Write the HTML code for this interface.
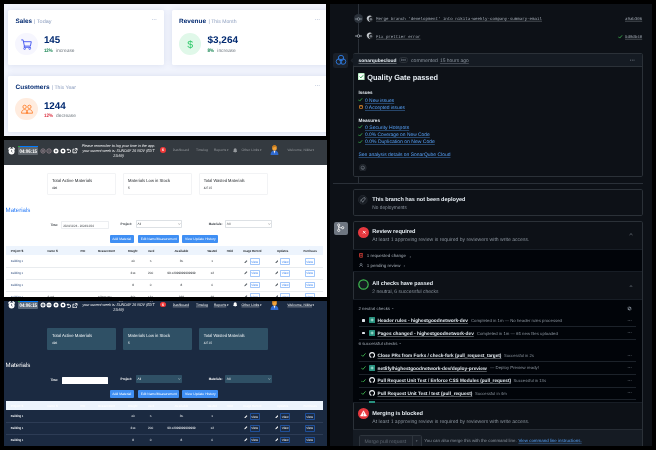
<!DOCTYPE html>
<html lang="en"><head><meta charset="utf-8"><title>Screens</title><style>
html,body{margin:0;padding:0;background:#000;}
body{width:656px;height:450px;overflow:hidden;position:relative;font-family:"Liberation Sans",sans-serif;}
.p{position:absolute;overflow:hidden;}
.a{position:absolute;display:block;}
.tx{font-family:"Liberation Sans",sans-serif;pointer-events:none;text-rendering:geometricPrecision;will-change:transform;}
text{white-space:pre;}
</style></head>
<body>
<div class="p" style="left:4px;top:4px;width:322px;height:132px;background:#f1f4fd">
<div class="a" style="left:4.00px;top:6.40px;width:155.60px;height:54.80px;background:#fff;border-radius:1.5px;box-shadow:0 0 6px rgba(1,41,112,.10);"></div>
<div class="a" style="left:168.00px;top:6.40px;width:168.00px;height:54.80px;background:#fff;border-radius:1.5px;box-shadow:0 0 6px rgba(1,41,112,.10);"></div>
<div class="a" style="left:4.00px;top:72.40px;width:332.00px;height:55.20px;background:#fff;border-radius:1.5px;box-shadow:0 0 6px rgba(1,41,112,.10);"></div>
<div class="a" style="left:11.40px;top:28.60px;width:22.20px;height:22.20px;background:#f6f6fe;border-radius:11.1px;"></div>
<div class="a" style="left:175.00px;top:28.60px;width:22.20px;height:22.20px;background:#e0f8e9;border-radius:11.1px;"></div>
<div class="a" style="left:11.40px;top:94.20px;width:22.20px;height:22.20px;background:#ffecdf;border-radius:11.1px;"></div>
<svg class="a" style="left:17.00px;top:34.60px;" width="11" height="11" viewBox="0 0 11 11"><g fill="none" stroke="#4154f1" stroke-width="0.9" stroke-linecap="round" stroke-linejoin="round"><path d="M0.6 0.9h1.5l1.3 6.2h6l0.9-4.4H2.6"/><path d="M3.4 7.1l-.4 1.2h6.6"/></g><circle cx="3.6" cy="9.6" r="0.9" fill="none" stroke="#4154f1" stroke-width="0.7"/><circle cx="8.7" cy="9.6" r="0.9" fill="none" stroke="#4154f1" stroke-width="0.7"/></svg>
<svg class="a" style="left:16.60px;top:100.20px;" width="12" height="10" viewBox="0 0 12 10"><g fill="none" stroke="#ff771d" stroke-width="0.8" stroke-linejoin="round"><circle cx="3.6" cy="2.9" r="1.7"/><circle cx="8.4" cy="2.9" r="1.7"/><path d="M0.5 9.2c0-2.4 1.4-3.6 3.1-3.6s3.1 1.2 3.1 3.6z"/><path d="M5.3 9.2c0-2.4 1.4-3.6 3.1-3.6s3.1 1.2 3.1 3.6z"/></g></svg>
<svg class="a tx" style="left:0;top:0" width="322" height="132">
<text y="19.20" font-size="6.3" fill="#012970" font-weight="700" x="11.50" textLength="16.50" lengthAdjust="spacingAndGlyphs">Sales</text>
<text y="18.92" font-size="5.2" fill="#899bbd" x="30.00" textLength="17.50" lengthAdjust="spacingAndGlyphs">| Today</text>
<text y="39.13" font-size="9.8" fill="#012970" font-weight="700" x="39.90" textLength="16.30" lengthAdjust="spacingAndGlyphs">145</text>
<text y="47.72" font-size="4.9" fill="#198754" font-weight="700" x="39.90" textLength="8.90" lengthAdjust="spacingAndGlyphs">12%</text>
<text y="47.72" font-size="4.9" fill="#6c757d" x="52.00" textLength="18.60" lengthAdjust="spacingAndGlyphs">increase</text>
<text y="17.05" font-size="5" fill="#aab7cf" font-weight="700" x="147.80">···</text>
<text y="19.20" font-size="6.3" fill="#012970" font-weight="700" x="175.10" textLength="26.90" lengthAdjust="spacingAndGlyphs">Revenue</text>
<text y="18.92" font-size="5.2" fill="#899bbd" x="204.50" textLength="28.00" lengthAdjust="spacingAndGlyphs">| This Month</text>
<text y="39.13" font-size="9.8" fill="#012970" font-weight="700" x="203.50" textLength="30.50" lengthAdjust="spacingAndGlyphs">$3,264</text>
<text y="47.72" font-size="4.9" fill="#198754" font-weight="700" x="203.50" textLength="6.50" lengthAdjust="spacingAndGlyphs">8%</text>
<text y="47.72" font-size="4.9" fill="#6c757d" x="213.30" textLength="18.50" lengthAdjust="spacingAndGlyphs">increase</text>
<text y="17.05" font-size="5" fill="#aab7cf" font-weight="700" x="311.10">···</text>
<text y="84.80" font-size="6.3" fill="#012970" font-weight="700" x="11.50" textLength="34.10" lengthAdjust="spacingAndGlyphs">Customers</text>
<text y="84.52" font-size="5.2" fill="#899bbd" x="47.80" textLength="24.10" lengthAdjust="spacingAndGlyphs">| This Year</text>
<text y="104.73" font-size="9.8" fill="#012970" font-weight="700" x="39.90" textLength="21.90" lengthAdjust="spacingAndGlyphs">1244</text>
<text y="113.31" font-size="4.9" fill="#dc3545" font-weight="700" x="39.90" textLength="9.20" lengthAdjust="spacingAndGlyphs">12%</text>
<text y="113.31" font-size="4.9" fill="#6c757d" x="52.00" textLength="19.90" lengthAdjust="spacingAndGlyphs">decrease</text>
<text y="82.65" font-size="5" fill="#aab7cf" font-weight="700" x="311.10">···</text>
<text y="43.57" font-size="10.5" fill="#2eca6a" x="186.20" text-anchor="middle">$</text>
</svg>
</div>
<div class="p" style="left:4px;top:140px;width:322.5px;height:157px;background:#ffffff">
<div class="a" style="left:0.00px;top:0.00px;width:323.00px;height:24.50px;background:#343a40;"></div>
<svg class="a" style="left:4.40px;top:6.60px;" width="7.2" height="8.1" viewBox="0 0 7.2 8.1"><g transform="scale(.9)"><circle cx="4" cy="5.100" r="3.300" fill="#fff"/><path d="M0.900 2.300L2.400 0.900M7.100 2.300L5.600 0.900" stroke="#fff" stroke-width="1.500" stroke-linecap="round"/><path d="M4 3.300V5.200l1 .7" fill="none" stroke="#343a40" stroke-width=".7"/></g></svg>
<div class="a" style="left:13.60px;top:6.10px;width:20.60px;height:0.80px;background:#007bff;"></div>
<div class="a" style="left:13.60px;top:6.10px;width:2.00px;height:0.80px;background:#28a745;"></div>
<div class="a" style="left:13.50px;top:7.20px;width:20.80px;height:7.60px;background:#5f666d;border-radius:1px;"></div>
<svg class="a" style="left:35.60px;top:7.90px;" width="6" height="6" viewBox="0 0 6 6"><circle cx="3" cy="3" r="2.150" fill="none" stroke="#9c8a93" stroke-width=".8"/><path d="M3 1.900v2.200M1.900 3h2.200" stroke="#9c8a93" stroke-width=".7"/></svg>
<svg class="a" style="left:42.30px;top:7.90px;" width="6" height="6" viewBox="0 0 6 6"><circle cx="3" cy="3" r="2.150" fill="none" stroke="#9c8a93" stroke-width=".8"/><path d="M1.900 3h2.200" stroke="#9c8a93" stroke-width=".7"/></svg>
<svg class="a" style="left:49.20px;top:7.90px;" width="6" height="6" viewBox="0 0 6 6"><circle cx="3" cy="3" r="2.500" fill="#fff"/><path d="M2.400 1.700L4.500 3 2.400 4.300z" fill="#343a40"/></svg>
<svg class="a" style="left:55.80px;top:7.90px;" width="6" height="6" viewBox="0 0 6 6"><circle cx="3" cy="3" r="2.500" fill="#fff"/><rect x="2.100" y="2.100" width="1.800" height="1.800" fill="#343a40"/></svg>
<svg class="a" style="left:61.60px;top:8.30px;" width="5.4" height="5.4" viewBox="0 0 5.4 5.4"><path d="M1.500 1.700h1.900a1.400 1.400 0 0 1 0 2.800H1.700" fill="none" stroke="#fff" stroke-width=".9"/><path d="M2.300 0.300L0.500 1.700l1.800 1.400z" fill="#fff"/></svg>
<svg class="a" style="left:68.00px;top:8.10px;" width="5.6" height="5.6" viewBox="0 0 5.6 5.6"><path d="M2.500 1.200H0.900v3.600h3.600V3.300" fill="none" stroke="#fff" stroke-width=".85"/><path d="M3.100 0.600h2v2M4.900 0.800L2.700 3" fill="none" stroke="#fff" stroke-width=".85"/></svg>
<div class="a" style="left:156.00px;top:7.10px;width:5.80px;height:5.80px;background:#f23a3a;border-radius:3px;"></div>
<svg class="a" style="left:229.00px;top:7.60px;" width="4.4" height="5.4" viewBox="0 0 4.4 5.4"><path d="M2.2 0.3c1 0 1.5.8 1.5 1.8 0 1.1.3 1.6.6 2H.1c.3-.4.6-.9.6-2C.7 1.1 1.2.3 2.2.3zM1.6 4.5h1.2a.6.6 0 0 1-1.2 0z" fill="#95999d"/></svg>
<svg class="a" style="left:266.40px;top:5.20px;" width="9" height="10" viewBox="0 0 9 10"><path d="M0.6 10c0-2.8 1.2-4.4 3.9-4.4S8.4 7.200 8.400 10z" fill="#2f6ad0"/><path d="M3.700 5.700h1.600l-.8 3z" fill="#f4f6fa"/><ellipse cx="4.5" cy="3.100" rx="2.300" ry="2.700" fill="#f2a33a"/><path d="M2.200 2.700c0-1.800 1-2.600 2.300-2.600s2.300.8 2.300 2.600c-.8-.2-1.300-.8-1.600-1.300-.6.700-1.800 1.200-3 1.300z" fill="#c77a1c"/></svg>
<div class="a" style="left:43.30px;top:33.40px;width:69.00px;height:22.00px;background:#ffffff;border:0.6px solid #f2f3f5;box-sizing:border-box;border-radius:1px;"></div>
<div class="a" style="left:119.40px;top:33.40px;width:68.50px;height:22.00px;background:#ffffff;border:0.6px solid #f2f3f5;box-sizing:border-box;border-radius:1px;"></div>
<div class="a" style="left:195.00px;top:33.40px;width:68.70px;height:22.00px;background:#ffffff;border:0.6px solid #f2f3f5;box-sizing:border-box;border-radius:1px;"></div>
<div class="a" style="left:57.30px;top:81.30px;width:47.40px;height:8.00px;background:#ffffff;border:0.6px solid #eceef1;box-sizing:border-box;border-radius:0.8px;"></div>
<div class="a" style="left:131.60px;top:80.30px;width:46.20px;height:7.30px;background:#ffffff;border:0.6px solid #dde1e5;box-sizing:border-box;border-radius:0.8px;"></div>
<svg class="a" style="left:174.00px;top:82.90px;" width="2.6" height="2" viewBox="0 0 2.6 2"><path d="M0.3 0.4L1.3 1.5 2.3 0.4" fill="none" stroke="#777" stroke-width=".5"/></svg>
<div class="a" style="left:220.90px;top:80.30px;width:46.90px;height:7.30px;background:#ffffff;border:0.6px solid #dde1e5;box-sizing:border-box;border-radius:0.8px;"></div>
<svg class="a" style="left:264.00px;top:82.90px;" width="2.6" height="2" viewBox="0 0 2.6 2"><path d="M0.3 0.4L1.3 1.5 2.3 0.4" fill="none" stroke="#777" stroke-width=".5"/></svg>
<div class="a" style="left:105.60px;top:95.00px;width:24.20px;height:8.10px;background:#3f8ff4;border-radius:0.9px;"></div>
<div class="a" style="left:134.20px;top:95.00px;width:41.10px;height:8.10px;background:#3f8ff4;border-radius:0.9px;"></div>
<div class="a" style="left:178.40px;top:95.00px;width:35.90px;height:8.10px;background:#3f8ff4;border-radius:0.9px;"></div>
<div class="a" style="left:1.50px;top:106.30px;width:317.30px;height:8.90px;background:#edf4fd;"></div>
<div class="a" style="left:245.80px;top:118.20px;width:9.80px;height:6.60px;background:#ffffff;border:0.7px solid #a4c8fa;box-sizing:border-box;border-radius:0.8px;"></div>
<svg class="a" style="left:240.40px;top:119.50px;" width="3.6" height="3.6" viewBox="0 0 3.6 3.6"><path d="M0.3 3.3l.3-1.100L2.600.2l.8.8L1.400 3z" fill="#555c63"/></svg>
<div class="a" style="left:276.30px;top:118.20px;width:9.80px;height:6.60px;background:#ffffff;border:0.7px solid #a4c8fa;box-sizing:border-box;border-radius:0.8px;"></div>
<svg class="a" style="left:270.60px;top:119.50px;" width="3.6" height="3.6" viewBox="0 0 3.6 3.6"><path d="M0.3 3.3l.3-1.100L2.600.2l.8.8L1.400 3z" fill="#555c63"/></svg>
<div class="a" style="left:300.80px;top:118.20px;width:9.80px;height:6.60px;background:#ffffff;border:0.7px solid #a4c8fa;box-sizing:border-box;border-radius:0.8px;"></div>
<div class="a" style="left:1.50px;top:127.15px;width:317.30px;height:0.60px;background:#e9ecef;"></div>
<div class="a" style="left:245.80px;top:129.95px;width:9.80px;height:6.60px;background:#ffffff;border:0.7px solid #a4c8fa;box-sizing:border-box;border-radius:0.8px;"></div>
<svg class="a" style="left:240.40px;top:131.25px;" width="3.6" height="3.6" viewBox="0 0 3.6 3.6"><path d="M0.3 3.3l.3-1.100L2.600.2l.8.8L1.400 3z" fill="#555c63"/></svg>
<div class="a" style="left:276.30px;top:129.95px;width:9.80px;height:6.60px;background:#ffffff;border:0.7px solid #a4c8fa;box-sizing:border-box;border-radius:0.8px;"></div>
<svg class="a" style="left:270.60px;top:131.25px;" width="3.6" height="3.6" viewBox="0 0 3.6 3.6"><path d="M0.3 3.3l.3-1.100L2.600.2l.8.8L1.400 3z" fill="#555c63"/></svg>
<div class="a" style="left:300.80px;top:129.95px;width:9.80px;height:6.60px;background:#ffffff;border:0.7px solid #a4c8fa;box-sizing:border-box;border-radius:0.8px;"></div>
<div class="a" style="left:1.50px;top:138.90px;width:317.30px;height:0.60px;background:#e9ecef;"></div>
<div class="a" style="left:245.80px;top:141.70px;width:9.80px;height:6.60px;background:#ffffff;border:0.7px solid #a4c8fa;box-sizing:border-box;border-radius:0.8px;"></div>
<svg class="a" style="left:240.40px;top:143.00px;" width="3.6" height="3.6" viewBox="0 0 3.6 3.6"><path d="M0.3 3.3l.3-1.100L2.600.2l.8.8L1.400 3z" fill="#555c63"/></svg>
<div class="a" style="left:276.30px;top:141.70px;width:9.80px;height:6.60px;background:#ffffff;border:0.7px solid #a4c8fa;box-sizing:border-box;border-radius:0.8px;"></div>
<svg class="a" style="left:270.60px;top:143.00px;" width="3.6" height="3.6" viewBox="0 0 3.6 3.6"><path d="M0.3 3.3l.3-1.100L2.600.2l.8.8L1.400 3z" fill="#555c63"/></svg>
<div class="a" style="left:300.80px;top:141.70px;width:9.80px;height:6.60px;background:#ffffff;border:0.7px solid #a4c8fa;box-sizing:border-box;border-radius:0.8px;"></div>
<div class="a" style="left:1.50px;top:150.65px;width:317.30px;height:0.60px;background:#e9ecef;"></div>
<div class="a" style="left:245.80px;top:153.45px;width:9.80px;height:6.60px;background:#ffffff;border:0.7px solid #a4c8fa;box-sizing:border-box;border-radius:0.8px;"></div>
<svg class="a" style="left:240.40px;top:154.75px;" width="3.6" height="3.6" viewBox="0 0 3.6 3.6"><path d="M0.3 3.3l.3-1.100L2.600.2l.8.8L1.400 3z" fill="#555c63"/></svg>
<div class="a" style="left:276.30px;top:153.45px;width:9.80px;height:6.60px;background:#ffffff;border:0.7px solid #a4c8fa;box-sizing:border-box;border-radius:0.8px;"></div>
<svg class="a" style="left:270.60px;top:154.75px;" width="3.6" height="3.6" viewBox="0 0 3.6 3.6"><path d="M0.3 3.3l.3-1.100L2.600.2l.8.8L1.400 3z" fill="#555c63"/></svg>
<div class="a" style="left:300.80px;top:153.45px;width:9.80px;height:6.60px;background:#ffffff;border:0.7px solid #a4c8fa;box-sizing:border-box;border-radius:0.8px;"></div>
<svg class="a tx" style="left:0;top:0" width="322.5" height="157">
<text y="12.92" font-size="5.2" fill="#ffffff" font-weight="700" x="15.50" textLength="17.50" lengthAdjust="spacingAndGlyphs">04:06:15</text>
<text y="6.97" font-size="3.9" fill="#f4f5f6" font-style="italic" x="114.40" text-anchor="middle" textLength="73.40" lengthAdjust="spacingAndGlyphs">Please remember to log your time in the app:</text>
<text y="12.06" font-size="3.9" fill="#f4f5f6" font-style="italic" x="114.40" text-anchor="middle" textLength="72.00" lengthAdjust="spacingAndGlyphs">your current week is: SUNDAY 26 NOV (EDT</text>
<text y="16.97" font-size="3.9" fill="#f4f5f6" font-style="italic" x="114.60" text-anchor="middle" textLength="10.50" lengthAdjust="spacingAndGlyphs">23:59)</text>
<text y="11.36" font-size="3.6" fill="#fff" font-weight="700" x="158.90" text-anchor="middle">6</text>
<text y="11.41" font-size="3.45" fill="#95999d" x="168.80" textLength="16.20" lengthAdjust="spacingAndGlyphs">Dashboard</text>
<text y="11.41" font-size="3.45" fill="#95999d" x="192.00" textLength="12.00" lengthAdjust="spacingAndGlyphs">Timelog</text>
<text y="11.41" font-size="3.45" fill="#95999d" x="209.80" textLength="12.50" lengthAdjust="spacingAndGlyphs">Reports</text>
<text y="11.45" font-size="3.0" fill="#95999d" x="223.00">▾</text>
<text y="11.41" font-size="3.45" fill="#95999d" x="237.50" textLength="17.80" lengthAdjust="spacingAndGlyphs">Other Links</text>
<text y="11.45" font-size="3.0" fill="#95999d" x="256.00">▾</text>
<text y="11.41" font-size="3.45" fill="#95999d" x="283.40" textLength="24.60" lengthAdjust="spacingAndGlyphs">Welcome, Nikita</text>
<text y="11.45" font-size="3.0" fill="#95999d" x="308.60">▾</text>
<text y="42.44" font-size="4.4" fill="#23272b" x="48.00" textLength="40.20" lengthAdjust="spacingAndGlyphs">Total Active Materials</text>
<text y="49.42" font-size="3.2" fill="#23272b" x="48.00" textLength="5.20" lengthAdjust="spacingAndGlyphs">496</text>
<text y="42.44" font-size="4.4" fill="#23272b" x="124.10" textLength="41.90" lengthAdjust="spacingAndGlyphs">Materials Low in Stock</text>
<text y="49.42" font-size="3.2" fill="#23272b" x="124.10" textLength="1.80" lengthAdjust="spacingAndGlyphs">5</text>
<text y="42.44" font-size="4.4" fill="#23272b" x="199.70" textLength="40.90" lengthAdjust="spacingAndGlyphs">Total Wasted Materials</text>
<text y="49.42" font-size="3.2" fill="#23272b" x="199.70" textLength="8.30" lengthAdjust="spacingAndGlyphs">427.15</text>
<text y="71.77" font-size="6.2" fill="#2a7cf7" x="1.60" textLength="24.80" lengthAdjust="spacingAndGlyphs">Materials</text>
<text y="86.46" font-size="3.3" fill="#343a40" font-weight="700" x="46.60" textLength="7.40" lengthAdjust="spacingAndGlyphs">Time:</text>
<text y="86.52" font-size="3.2" fill="#3d4247" x="59.20" textLength="30.80" lengthAdjust="spacingAndGlyphs">2024/11/26 - 2024/12/03</text>
<text y="85.16" font-size="3.3" fill="#343a40" font-weight="700" x="116.60" textLength="11.40" lengthAdjust="spacingAndGlyphs">Project:</text>
<text y="85.16" font-size="3.3" fill="#343a40" font-weight="700" x="204.80" textLength="13.60" lengthAdjust="spacingAndGlyphs">Materials:</text>
<text y="85.12" font-size="3.2" fill="#3d4247" x="133.50">All</text>
<text y="85.12" font-size="3.2" fill="#3d4247" x="222.80">All</text>
<text y="100.37" font-size="3.35" fill="#ffffff" x="108.20" textLength="19.00" lengthAdjust="spacingAndGlyphs">Add Material</text>
<text y="100.37" font-size="3.35" fill="#ffffff" x="136.80" textLength="35.90" lengthAdjust="spacingAndGlyphs">Edit Name/Measurement</text>
<text y="100.37" font-size="3.35" fill="#ffffff" x="181.00" textLength="30.70" lengthAdjust="spacingAndGlyphs">View Update History</text>
<text y="112.28" font-size="3.1" fill="#1f2429" font-weight="700" x="6.80" textLength="13.00" lengthAdjust="spacingAndGlyphs">Project ⇅</text>
<text y="112.28" font-size="3.1" fill="#1f2429" font-weight="700" x="43.50" textLength="10.50" lengthAdjust="spacingAndGlyphs">Name ⇅</text>
<text y="112.28" font-size="3.1" fill="#1f2429" font-weight="700" x="76.50" textLength="4.70" lengthAdjust="spacingAndGlyphs">PID</text>
<text y="112.28" font-size="3.1" fill="#1f2429" font-weight="700" x="94.00" textLength="17.00" lengthAdjust="spacingAndGlyphs">Measurement</text>
<text y="112.28" font-size="3.1" fill="#1f2429" font-weight="700" x="124.00" textLength="9.40" lengthAdjust="spacingAndGlyphs">Bought</text>
<text y="112.28" font-size="3.1" fill="#1f2429" font-weight="700" x="144.00" textLength="6.20" lengthAdjust="spacingAndGlyphs">Used</text>
<text y="112.28" font-size="3.1" fill="#1f2429" font-weight="700" x="170.40" textLength="14.00" lengthAdjust="spacingAndGlyphs">Available</text>
<text y="112.28" font-size="3.1" fill="#1f2429" font-weight="700" x="203.40" textLength="9.60" lengthAdjust="spacingAndGlyphs">Wasted</text>
<text y="112.28" font-size="3.1" fill="#1f2429" font-weight="700" x="222.70" textLength="6.30" lengthAdjust="spacingAndGlyphs">Hold</text>
<text y="112.28" font-size="3.1" fill="#1f2429" font-weight="700" x="239.00" textLength="18.40" lengthAdjust="spacingAndGlyphs">Usage Record</text>
<text y="112.28" font-size="3.1" fill="#1f2429" font-weight="700" x="273.00" textLength="11.40" lengthAdjust="spacingAndGlyphs">Updates</text>
<text y="112.28" font-size="3.1" fill="#1f2429" font-weight="700" x="299.60" textLength="13.40" lengthAdjust="spacingAndGlyphs">Purchases</text>
<text y="122.38" font-size="3.1" fill="#2b4a7c" x="6.80" textLength="12.40" lengthAdjust="spacingAndGlyphs">Building 1</text>
<text y="122.38" font-size="3.1" fill="#2f3439" x="129.00" text-anchor="middle">40</text>
<text y="122.38" font-size="3.1" fill="#2f3439" x="146.60" text-anchor="middle">5</text>
<text y="122.38" font-size="3.1" fill="#2f3439" x="177.40" text-anchor="middle">35</text>
<text y="122.38" font-size="3.1" fill="#2f3439" x="208.20" text-anchor="middle">1</text>
<text y="122.69" font-size="3.1" fill="#2f7df0" x="250.70" text-anchor="middle">View</text>
<text y="122.69" font-size="3.1" fill="#2f7df0" x="281.20" text-anchor="middle">View</text>
<text y="122.69" font-size="3.1" fill="#2f7df0" x="305.70" text-anchor="middle">View</text>
<text y="134.13" font-size="3.1" fill="#2b4a7c" x="6.80" textLength="12.40" lengthAdjust="spacingAndGlyphs">Building 1</text>
<text y="134.13" font-size="3.1" fill="#2f3439" x="129.00" text-anchor="middle">214</text>
<text y="134.13" font-size="3.1" fill="#2f3439" x="146.60" text-anchor="middle">200</text>
<text y="134.13" font-size="3.1" fill="#2f3439" x="177.40" text-anchor="middle">99.12999999999999</text>
<text y="134.13" font-size="3.1" fill="#2f3439" x="208.20" text-anchor="middle">12</text>
<text y="134.44" font-size="3.1" fill="#2f7df0" x="250.70" text-anchor="middle">View</text>
<text y="134.44" font-size="3.1" fill="#2f7df0" x="281.20" text-anchor="middle">View</text>
<text y="134.44" font-size="3.1" fill="#2f7df0" x="305.70" text-anchor="middle">View</text>
<text y="145.88" font-size="3.1" fill="#2b4a7c" x="6.80" textLength="12.40" lengthAdjust="spacingAndGlyphs">Building 1</text>
<text y="145.88" font-size="3.1" fill="#2f3439" x="129.00" text-anchor="middle">8</text>
<text y="145.88" font-size="3.1" fill="#2f3439" x="146.60" text-anchor="middle">0</text>
<text y="145.88" font-size="3.1" fill="#2f3439" x="177.40" text-anchor="middle">8</text>
<text y="145.88" font-size="3.1" fill="#2f3439" x="208.20" text-anchor="middle">0</text>
<text y="146.19" font-size="3.1" fill="#2f7df0" x="250.70" text-anchor="middle">View</text>
<text y="146.19" font-size="3.1" fill="#2f7df0" x="281.20" text-anchor="middle">View</text>
<text y="146.19" font-size="3.1" fill="#2f7df0" x="305.70" text-anchor="middle">View</text>
<text y="157.63" font-size="3.1" fill="#2b4a7c" x="6.80" textLength="12.40" lengthAdjust="spacingAndGlyphs">Building 1</text>
<text y="157.63" font-size="3.1" fill="#2f3439" x="43.50" textLength="6.50" lengthAdjust="spacingAndGlyphs">Sand</text>
<text y="157.63" font-size="3.1" fill="#2f3439" x="94.00" textLength="14.00" lengthAdjust="spacingAndGlyphs">Kilograms</text>
<text y="157.63" font-size="3.1" fill="#2f3439" x="129.00" text-anchor="middle">365</text>
<text y="157.63" font-size="3.1" fill="#2f3439" x="146.60" text-anchor="middle">137</text>
<text y="157.63" font-size="3.1" fill="#2f3439" x="177.40" text-anchor="middle">228</text>
<text y="157.63" font-size="3.1" fill="#2f3439" x="208.20" text-anchor="middle">28</text>
<text y="157.94" font-size="3.1" fill="#2f7df0" x="250.70" text-anchor="middle">View</text>
<text y="157.94" font-size="3.1" fill="#2f7df0" x="281.20" text-anchor="middle">View</text>
<text y="157.94" font-size="3.1" fill="#2f7df0" x="305.70" text-anchor="middle">View</text>
</svg>
</div>
<div class="p" style="left:4px;top:301px;width:322.5px;height:145px;background:#1b2a41">
<div class="a" style="left:0.00px;top:-6.60px;width:323.00px;height:24.50px;background:#1b2a41;"></div>
<svg class="a" style="left:4.40px;top:0.00px;" width="7.2" height="8.1" viewBox="0 0 7.2 8.1"><g transform="scale(.9)"><circle cx="4" cy="5.100" r="3.300" fill="#fff"/><path d="M0.900 2.300L2.400 0.900M7.100 2.300L5.600 0.900" stroke="#fff" stroke-width="1.500" stroke-linecap="round"/><path d="M4 3.300V5.200l1 .7" fill="none" stroke="#1b2a41" stroke-width=".7"/></g></svg>
<div class="a" style="left:13.60px;top:-0.50px;width:20.60px;height:0.80px;background:#007bff;"></div>
<div class="a" style="left:13.60px;top:-0.50px;width:2.00px;height:0.80px;background:#28a745;"></div>
<div class="a" style="left:13.50px;top:0.60px;width:20.80px;height:7.60px;background:#5b6a7c;border-radius:1px;"></div>
<svg class="a" style="left:35.60px;top:1.30px;" width="6" height="6" viewBox="0 0 6 6"><circle cx="3" cy="3" r="2.500" fill="#fff"/><path d="M3 1.500v3M1.500 3h3" stroke="#1b2a41" stroke-width=".8"/></svg>
<svg class="a" style="left:42.30px;top:1.30px;" width="6" height="6" viewBox="0 0 6 6"><circle cx="3" cy="3" r="2.500" fill="#fff"/><path d="M1.500 3h3" stroke="#1b2a41" stroke-width=".8"/></svg>
<svg class="a" style="left:49.20px;top:1.30px;" width="6" height="6" viewBox="0 0 6 6"><circle cx="3" cy="3" r="2.500" fill="#fff"/><path d="M2.400 1.700L4.500 3 2.400 4.300z" fill="#1b2a41"/></svg>
<svg class="a" style="left:55.80px;top:1.30px;" width="6" height="6" viewBox="0 0 6 6"><circle cx="3" cy="3" r="2.500" fill="#fff"/><rect x="2.100" y="2.100" width="1.800" height="1.800" fill="#1b2a41"/></svg>
<svg class="a" style="left:61.60px;top:1.70px;" width="5.4" height="5.4" viewBox="0 0 5.4 5.4"><path d="M1.500 1.700h1.900a1.400 1.400 0 0 1 0 2.800H1.700" fill="none" stroke="#fff" stroke-width=".9"/><path d="M2.300 0.300L0.500 1.700l1.800 1.400z" fill="#fff"/></svg>
<svg class="a" style="left:68.00px;top:1.50px;" width="5.6" height="5.6" viewBox="0 0 5.6 5.6"><path d="M2.500 1.200H0.900v3.600h3.600V3.300" fill="none" stroke="#fff" stroke-width=".85"/><path d="M3.100 0.600h2v2M4.900 0.800L2.700 3" fill="none" stroke="#fff" stroke-width=".85"/></svg>
<div class="a" style="left:156.00px;top:0.50px;width:5.80px;height:5.80px;background:#f23a3a;border-radius:3px;"></div>
<svg class="a" style="left:229.00px;top:1.00px;" width="4.4" height="5.4" viewBox="0 0 4.4 5.4"><path d="M2.2 0.3c1 0 1.5.8 1.5 1.8 0 1.1.3 1.6.6 2H.1c.3-.4.6-.9.6-2C.7 1.1 1.2.3 2.2.3zM1.6 4.5h1.2a.6.6 0 0 1-1.2 0z" fill="#ffffff"/></svg>
<svg class="a" style="left:266.40px;top:-1.40px;" width="9" height="10" viewBox="0 0 9 10"><path d="M0.6 10c0-2.8 1.2-4.4 3.9-4.4S8.4 7.200 8.400 10z" fill="#2f6ad0"/><path d="M3.700 5.700h1.600l-.8 3z" fill="#f4f6fa"/><ellipse cx="4.5" cy="3.100" rx="2.300" ry="2.700" fill="#f2a33a"/><path d="M2.200 2.700c0-1.800 1-2.600 2.300-2.600s2.300.8 2.300 2.600c-.8-.2-1.300-.8-1.600-1.300-.6.700-1.800 1.200-3 1.300z" fill="#c77a1c"/></svg>
<div class="a" style="left:43.30px;top:27.40px;width:69.00px;height:22.00px;background:#2f5065;border-radius:1px;"></div>
<div class="a" style="left:119.40px;top:27.40px;width:68.50px;height:22.00px;background:#2f5065;border-radius:1px;"></div>
<div class="a" style="left:195.00px;top:27.40px;width:68.70px;height:22.00px;background:#2f5065;border-radius:1px;"></div>
<div class="a" style="left:57.70px;top:75.60px;width:46.60px;height:7.70px;background:#ffffff;border-radius:0.6px;"></div>
<div class="a" style="left:131.60px;top:74.30px;width:46.20px;height:7.30px;background:#2f5065;border-radius:0.8px;"></div>
<svg class="a" style="left:174.00px;top:76.90px;" width="2.6" height="2" viewBox="0 0 2.6 2"><path d="M0.3 0.4L1.3 1.5 2.3 0.4" fill="none" stroke="#dfe6ea" stroke-width=".5"/></svg>
<div class="a" style="left:220.90px;top:74.30px;width:46.90px;height:7.30px;background:#2f5065;border-radius:0.8px;"></div>
<svg class="a" style="left:264.00px;top:76.90px;" width="2.6" height="2" viewBox="0 0 2.6 2"><path d="M0.3 0.4L1.3 1.5 2.3 0.4" fill="none" stroke="#dfe6ea" stroke-width=".5"/></svg>
<div class="a" style="left:105.60px;top:89.00px;width:24.20px;height:8.10px;background:#3f8ff4;border-radius:0.9px;"></div>
<div class="a" style="left:134.20px;top:89.00px;width:41.10px;height:8.10px;background:#3f8ff4;border-radius:0.9px;"></div>
<div class="a" style="left:178.40px;top:89.00px;width:35.90px;height:8.10px;background:#3f8ff4;border-radius:0.9px;"></div>
<div class="a" style="left:1.50px;top:100.30px;width:317.30px;height:8.90px;background:#edf4fd;"></div>
<div class="a" style="left:245.80px;top:112.20px;width:9.80px;height:6.60px;background:#1b2a41;border:0.7px solid #1f4f99;box-sizing:border-box;border-radius:0.8px;"></div>
<svg class="a" style="left:240.40px;top:113.50px;" width="3.6" height="3.6" viewBox="0 0 3.6 3.6"><path d="M0.3 3.3l.3-1.100L2.600.2l.8.8L1.400 3z" fill="#ffffff"/></svg>
<div class="a" style="left:276.30px;top:112.20px;width:9.80px;height:6.60px;background:#1b2a41;border:0.7px solid #1f4f99;box-sizing:border-box;border-radius:0.8px;"></div>
<svg class="a" style="left:270.60px;top:113.50px;" width="3.6" height="3.6" viewBox="0 0 3.6 3.6"><path d="M0.3 3.3l.3-1.100L2.600.2l.8.8L1.400 3z" fill="#ffffff"/></svg>
<div class="a" style="left:300.80px;top:112.20px;width:9.80px;height:6.60px;background:#1b2a41;border:0.7px solid #1f4f99;box-sizing:border-box;border-radius:0.8px;"></div>
<div class="a" style="left:1.50px;top:121.15px;width:317.30px;height:0.60px;background:#2d3c55;"></div>
<div class="a" style="left:245.80px;top:123.95px;width:9.80px;height:6.60px;background:#1b2a41;border:0.7px solid #1f4f99;box-sizing:border-box;border-radius:0.8px;"></div>
<svg class="a" style="left:240.40px;top:125.25px;" width="3.6" height="3.6" viewBox="0 0 3.6 3.6"><path d="M0.3 3.3l.3-1.100L2.600.2l.8.8L1.400 3z" fill="#ffffff"/></svg>
<div class="a" style="left:276.30px;top:123.95px;width:9.80px;height:6.60px;background:#1b2a41;border:0.7px solid #1f4f99;box-sizing:border-box;border-radius:0.8px;"></div>
<svg class="a" style="left:270.60px;top:125.25px;" width="3.6" height="3.6" viewBox="0 0 3.6 3.6"><path d="M0.3 3.3l.3-1.100L2.600.2l.8.8L1.400 3z" fill="#ffffff"/></svg>
<div class="a" style="left:300.80px;top:123.95px;width:9.80px;height:6.60px;background:#1b2a41;border:0.7px solid #1f4f99;box-sizing:border-box;border-radius:0.8px;"></div>
<div class="a" style="left:1.50px;top:132.90px;width:317.30px;height:0.60px;background:#2d3c55;"></div>
<div class="a" style="left:245.80px;top:135.70px;width:9.80px;height:6.60px;background:#1b2a41;border:0.7px solid #1f4f99;box-sizing:border-box;border-radius:0.8px;"></div>
<svg class="a" style="left:240.40px;top:137.00px;" width="3.6" height="3.6" viewBox="0 0 3.6 3.6"><path d="M0.3 3.3l.3-1.100L2.600.2l.8.8L1.400 3z" fill="#ffffff"/></svg>
<div class="a" style="left:276.30px;top:135.70px;width:9.80px;height:6.60px;background:#1b2a41;border:0.7px solid #1f4f99;box-sizing:border-box;border-radius:0.8px;"></div>
<svg class="a" style="left:270.60px;top:137.00px;" width="3.6" height="3.6" viewBox="0 0 3.6 3.6"><path d="M0.3 3.3l.3-1.100L2.600.2l.8.8L1.400 3z" fill="#ffffff"/></svg>
<div class="a" style="left:300.80px;top:135.70px;width:9.80px;height:6.60px;background:#1b2a41;border:0.7px solid #1f4f99;box-sizing:border-box;border-radius:0.8px;"></div>
<div class="a" style="left:1.50px;top:144.65px;width:317.30px;height:0.60px;background:#2d3c55;"></div>
<div class="a" style="left:245.80px;top:147.45px;width:9.80px;height:6.60px;background:#1b2a41;border:0.7px solid #1f4f99;box-sizing:border-box;border-radius:0.8px;"></div>
<svg class="a" style="left:240.40px;top:148.75px;" width="3.6" height="3.6" viewBox="0 0 3.6 3.6"><path d="M0.3 3.3l.3-1.100L2.600.2l.8.8L1.400 3z" fill="#ffffff"/></svg>
<div class="a" style="left:276.30px;top:147.45px;width:9.80px;height:6.60px;background:#1b2a41;border:0.7px solid #1f4f99;box-sizing:border-box;border-radius:0.8px;"></div>
<svg class="a" style="left:270.60px;top:148.75px;" width="3.6" height="3.6" viewBox="0 0 3.6 3.6"><path d="M0.3 3.3l.3-1.100L2.600.2l.8.8L1.400 3z" fill="#ffffff"/></svg>
<div class="a" style="left:300.80px;top:147.45px;width:9.80px;height:6.60px;background:#1b2a41;border:0.7px solid #1f4f99;box-sizing:border-box;border-radius:0.8px;"></div>
<svg class="a tx" style="left:0;top:0" width="322.5" height="145">
<text y="6.32" font-size="5.2" fill="#ffffff" font-weight="700" x="15.50" textLength="17.50" lengthAdjust="spacingAndGlyphs">04:06:15</text>
<text y="0.37" font-size="3.9" fill="#f4f5f6" font-style="italic" x="114.40" text-anchor="middle" textLength="73.40" lengthAdjust="spacingAndGlyphs">Please remember to log your time in the app:</text>
<text y="5.47" font-size="3.9" fill="#f4f5f6" font-style="italic" x="114.40" text-anchor="middle" textLength="72.00" lengthAdjust="spacingAndGlyphs">your current week is: SUNDAY 26 NOV (EDT</text>
<text y="10.37" font-size="3.9" fill="#f4f5f6" font-style="italic" x="114.60" text-anchor="middle" textLength="10.50" lengthAdjust="spacingAndGlyphs">23:59)</text>
<text y="4.76" font-size="3.6" fill="#fff" font-weight="700" x="158.90" text-anchor="middle">6</text>
<text y="4.81" font-size="3.45" fill="#ffffff" x="168.80" textLength="16.20" lengthAdjust="spacingAndGlyphs">Dashboard</text>
<rect x="168.80" y="5.69" width="16.20" height="0.5" fill="#ffffff" opacity="0.75"/>
<text y="4.81" font-size="3.45" fill="#ffffff" x="192.00" textLength="12.00" lengthAdjust="spacingAndGlyphs">Timelog</text>
<rect x="192.00" y="5.69" width="12.00" height="0.5" fill="#ffffff" opacity="0.75"/>
<text y="4.81" font-size="3.45" fill="#ffffff" x="209.80" textLength="12.50" lengthAdjust="spacingAndGlyphs">Reports</text>
<rect x="209.80" y="5.69" width="12.50" height="0.5" fill="#ffffff" opacity="0.75"/>
<text y="4.85" font-size="3.0" fill="#ffffff" x="223.00">▾</text>
<text y="4.81" font-size="3.45" fill="#ffffff" x="237.50" textLength="17.80" lengthAdjust="spacingAndGlyphs">Other Links</text>
<rect x="237.50" y="5.69" width="17.80" height="0.5" fill="#ffffff" opacity="0.75"/>
<text y="4.85" font-size="3.0" fill="#ffffff" x="256.00">▾</text>
<text y="4.81" font-size="3.45" fill="#ffffff" x="283.40" textLength="24.60" lengthAdjust="spacingAndGlyphs">Welcome, Nikita</text>
<rect x="283.40" y="5.69" width="24.60" height="0.5" fill="#ffffff" opacity="0.75"/>
<text y="4.85" font-size="3.0" fill="#ffffff" x="308.60">▾</text>
<text y="36.44" font-size="4.4" fill="#f4f7f9" x="48.00" textLength="40.20" lengthAdjust="spacingAndGlyphs">Total Active Materials</text>
<text y="43.42" font-size="3.2" fill="#f4f7f9" x="48.00" textLength="5.20" lengthAdjust="spacingAndGlyphs">496</text>
<text y="36.44" font-size="4.4" fill="#f4f7f9" x="124.10" textLength="41.90" lengthAdjust="spacingAndGlyphs">Materials Low in Stock</text>
<text y="43.42" font-size="3.2" fill="#f4f7f9" x="124.10" textLength="1.80" lengthAdjust="spacingAndGlyphs">5</text>
<text y="36.44" font-size="4.4" fill="#f4f7f9" x="199.70" textLength="40.90" lengthAdjust="spacingAndGlyphs">Total Wasted Materials</text>
<text y="43.42" font-size="3.2" fill="#f4f7f9" x="199.70" textLength="8.30" lengthAdjust="spacingAndGlyphs">427.15</text>
<text y="65.77" font-size="6.2" fill="#ffffff" x="1.60" textLength="24.80" lengthAdjust="spacingAndGlyphs">Materials</text>
<text y="80.45" font-size="3.3" fill="#ffffff" font-weight="700" x="46.60" textLength="7.40" lengthAdjust="spacingAndGlyphs">Time:</text>
<text y="79.15" font-size="3.3" fill="#ffffff" font-weight="700" x="116.60" textLength="11.40" lengthAdjust="spacingAndGlyphs">Project:</text>
<text y="79.15" font-size="3.3" fill="#ffffff" font-weight="700" x="204.80" textLength="13.60" lengthAdjust="spacingAndGlyphs">Materials:</text>
<text y="79.12" font-size="3.2" fill="#ffffff" x="133.50">All</text>
<text y="79.12" font-size="3.2" fill="#ffffff" x="222.80">All</text>
<text y="94.37" font-size="3.35" fill="#ffffff" x="108.20" textLength="19.00" lengthAdjust="spacingAndGlyphs">Add Material</text>
<text y="94.37" font-size="3.35" fill="#ffffff" x="136.80" textLength="35.90" lengthAdjust="spacingAndGlyphs">Edit Name/Measurement</text>
<text y="94.37" font-size="3.35" fill="#ffffff" x="181.00" textLength="30.70" lengthAdjust="spacingAndGlyphs">View Update History</text>
<text y="106.28" font-size="3.1" fill="#ffffff" font-weight="700" x="6.80" textLength="13.00" lengthAdjust="spacingAndGlyphs">Project ⇅</text>
<text y="106.28" font-size="3.1" fill="#ffffff" font-weight="700" x="43.50" textLength="10.50" lengthAdjust="spacingAndGlyphs">Name ⇅</text>
<text y="106.28" font-size="3.1" fill="#ffffff" font-weight="700" x="76.50" textLength="4.70" lengthAdjust="spacingAndGlyphs">PID</text>
<text y="106.28" font-size="3.1" fill="#ffffff" font-weight="700" x="94.00" textLength="17.00" lengthAdjust="spacingAndGlyphs">Measurement</text>
<text y="106.28" font-size="3.1" fill="#ffffff" font-weight="700" x="124.00" textLength="9.40" lengthAdjust="spacingAndGlyphs">Bought</text>
<text y="106.28" font-size="3.1" fill="#ffffff" font-weight="700" x="144.00" textLength="6.20" lengthAdjust="spacingAndGlyphs">Used</text>
<text y="106.28" font-size="3.1" fill="#ffffff" font-weight="700" x="170.40" textLength="14.00" lengthAdjust="spacingAndGlyphs">Available</text>
<text y="106.28" font-size="3.1" fill="#ffffff" font-weight="700" x="203.40" textLength="9.60" lengthAdjust="spacingAndGlyphs">Wasted</text>
<text y="106.28" font-size="3.1" fill="#ffffff" font-weight="700" x="222.70" textLength="6.30" lengthAdjust="spacingAndGlyphs">Hold</text>
<text y="106.28" font-size="3.1" fill="#ffffff" font-weight="700" x="239.00" textLength="18.40" lengthAdjust="spacingAndGlyphs">Usage Record</text>
<text y="106.28" font-size="3.1" fill="#ffffff" font-weight="700" x="273.00" textLength="11.40" lengthAdjust="spacingAndGlyphs">Updates</text>
<text y="106.28" font-size="3.1" fill="#ffffff" font-weight="700" x="299.60" textLength="13.40" lengthAdjust="spacingAndGlyphs">Purchases</text>
<text y="116.38" font-size="3.1" fill="#f2f5f8" font-weight="700" x="6.80" textLength="12.40" lengthAdjust="spacingAndGlyphs">Building 1</text>
<text y="116.38" font-size="3.1" fill="#f2f5f8" x="129.00" text-anchor="middle">40</text>
<text y="116.38" font-size="3.1" fill="#f2f5f8" x="146.60" text-anchor="middle">5</text>
<text y="116.38" font-size="3.1" fill="#f2f5f8" x="177.40" text-anchor="middle">35</text>
<text y="116.38" font-size="3.1" fill="#f2f5f8" x="208.20" text-anchor="middle">1</text>
<text y="116.69" font-size="3.1" fill="#ffffff" x="250.70" text-anchor="middle">View</text>
<text y="116.69" font-size="3.1" fill="#ffffff" x="281.20" text-anchor="middle">View</text>
<text y="116.69" font-size="3.1" fill="#ffffff" x="305.70" text-anchor="middle">View</text>
<text y="128.13" font-size="3.1" fill="#f2f5f8" font-weight="700" x="6.80" textLength="12.40" lengthAdjust="spacingAndGlyphs">Building 1</text>
<text y="128.13" font-size="3.1" fill="#f2f5f8" x="129.00" text-anchor="middle">214</text>
<text y="128.13" font-size="3.1" fill="#f2f5f8" x="146.60" text-anchor="middle">200</text>
<text y="128.13" font-size="3.1" fill="#f2f5f8" x="177.40" text-anchor="middle">99.12999999999999</text>
<text y="128.13" font-size="3.1" fill="#f2f5f8" x="208.20" text-anchor="middle">12</text>
<text y="128.44" font-size="3.1" fill="#ffffff" x="250.70" text-anchor="middle">View</text>
<text y="128.44" font-size="3.1" fill="#ffffff" x="281.20" text-anchor="middle">View</text>
<text y="128.44" font-size="3.1" fill="#ffffff" x="305.70" text-anchor="middle">View</text>
<text y="139.88" font-size="3.1" fill="#f2f5f8" font-weight="700" x="6.80" textLength="12.40" lengthAdjust="spacingAndGlyphs">Building 1</text>
<text y="139.88" font-size="3.1" fill="#f2f5f8" x="129.00" text-anchor="middle">8</text>
<text y="139.88" font-size="3.1" fill="#f2f5f8" x="146.60" text-anchor="middle">0</text>
<text y="139.88" font-size="3.1" fill="#f2f5f8" x="177.40" text-anchor="middle">8</text>
<text y="139.88" font-size="3.1" fill="#f2f5f8" x="208.20" text-anchor="middle">0</text>
<text y="140.19" font-size="3.1" fill="#ffffff" x="250.70" text-anchor="middle">View</text>
<text y="140.19" font-size="3.1" fill="#ffffff" x="281.20" text-anchor="middle">View</text>
<text y="140.19" font-size="3.1" fill="#ffffff" x="305.70" text-anchor="middle">View</text>
<text y="151.63" font-size="3.1" fill="#f2f5f8" font-weight="700" x="6.80" textLength="12.40" lengthAdjust="spacingAndGlyphs">Building 1</text>
<text y="151.63" font-size="3.1" fill="#f2f5f8" x="43.50" textLength="6.50" lengthAdjust="spacingAndGlyphs">Sand</text>
<text y="151.63" font-size="3.1" fill="#f2f5f8" x="94.00" textLength="14.00" lengthAdjust="spacingAndGlyphs">Kilograms</text>
<text y="151.63" font-size="3.1" fill="#f2f5f8" x="129.00" text-anchor="middle">365</text>
<text y="151.63" font-size="3.1" fill="#f2f5f8" x="146.60" text-anchor="middle">137</text>
<text y="151.63" font-size="3.1" fill="#f2f5f8" x="177.40" text-anchor="middle">228</text>
<text y="151.63" font-size="3.1" fill="#f2f5f8" x="208.20" text-anchor="middle">28</text>
<text y="151.94" font-size="3.1" fill="#ffffff" x="250.70" text-anchor="middle">View</text>
<text y="151.94" font-size="3.1" fill="#ffffff" x="281.20" text-anchor="middle">View</text>
<text y="151.94" font-size="3.1" fill="#ffffff" x="305.70" text-anchor="middle">View</text>
</svg>
</div>
<div class="p" style="left:330px;top:4px;width:322px;height:442px;background:#0d1117">
<div class="a" style="left:28.10px;top:0.00px;width:0.90px;height:49.00px;background:#2a3038;"></div>
<div class="a" style="left:28.10px;top:173.00px;width:0.90px;height:6.40px;background:#2a3038;"></div>
<div class="a" style="left:24.00px;top:9.80px;width:9.00px;height:9.00px;background:#2a313a;border-radius:4.5px;"></div>
<svg class="a" style="left:25.05px;top:12.50px;" width="7" height="4" viewBox="0 0 7 4"><path d="M0 2h2M5 2h2" stroke="#9aa3ad" stroke-width=".7"/><circle cx="3.5" cy="2" r="1.3" fill="none" stroke="#9aa3ad" stroke-width=".7"/></svg>
<div class="a" style="left:25.50px;top:29.80px;width:6.10px;height:5.20px;background:#0d1117;"></div>
<svg class="a" style="left:25.05px;top:30.40px;" width="7" height="4" viewBox="0 0 7 4"><path d="M0 2h2M5 2h2" stroke="#c3cad2" stroke-width=".7"/><circle cx="3.5" cy="2" r="1.3" fill="none" stroke="#c3cad2" stroke-width=".7"/></svg>
<svg class="a" style="left:36.10px;top:10.50px;" width="7.6" height="7.6" viewBox="0 0 7.6 7.6"><circle cx="3.800" cy="3.800" r="3.700" fill="#191c21"/><path d="M1.100 4.600A2.900 2.900 0 0 1 5.900 1.500c-1.500-.2-2.800.7-3.100 2.100s.5 2.600 1.700 3A2.900 2.900 0 0 1 1.100 4.600z" fill="#c4c9cf"/><circle cx="4.900" cy="4.300" r="1.300" fill="#6d737a"/></svg>
<svg class="a" style="left:36.10px;top:28.40px;" width="7.6" height="7.6" viewBox="0 0 7.6 7.6"><circle cx="3.800" cy="3.800" r="3.700" fill="#191c21"/><path d="M1.100 4.600A2.900 2.900 0 0 1 5.900 1.500c-1.500-.2-2.800.7-3.100 2.100s.5 2.600 1.700 3A2.900 2.900 0 0 1 1.100 4.600z" fill="#c4c9cf"/><circle cx="4.900" cy="4.300" r="1.300" fill="#6d737a"/></svg>
<svg class="a" style="left:288.40px;top:31.00px;" width="4.4" height="3.6" viewBox="0 0 4.4 3.6"><path d="M0.5 1.9L1.700 3.100 3.900 0.600" fill="none" stroke="#3fb950" stroke-width=".8" stroke-linecap="round"/></svg>
<div class="a" style="left:3.00px;top:48.60px;width:15.20px;height:15.20px;background:#1a2029;border-radius:2.2px;"></div>
<svg class="a" style="left:4.60px;top:50.20px;" width="12" height="12" viewBox="0 0 12 12"><g fill="none" stroke="#2c78dc" stroke-width=".95"><circle cx="6" cy="4" r="2.700"/><circle cx="3.900" cy="7.600" r="2.700"/><circle cx="8.100" cy="7.600" r="2.700"/></g></svg>
<div class="a" style="left:22.70px;top:48.80px;width:290.10px;height:124.50px;background:#0d1117;border:0.7px solid #2b3138;box-sizing:border-box;border-radius:1.8px;"></div>
<div class="a" style="left:23.40px;top:49.50px;width:288.70px;height:12.70px;background:#151b23;border-radius:1.2px;"></div>
<div class="a" style="left:23.40px;top:62.00px;width:288.70px;height:0.60px;background:#2b3138;"></div>
<svg class="a" style="left:19.70px;top:53.60px;" width="3.6" height="5" viewBox="0 0 3.6 5"><path d="M3.600 0.200L0.800 2.500 3.600 4.800z" fill="#151b23" stroke="#2b3138" stroke-width=".6"/></svg>
<div class="a" style="left:68.60px;top:53.20px;width:9.40px;height:5.80px;background:transparent;border:0.6px solid #2b3138;box-sizing:border-box;border-radius:2.8px;"></div>
<svg class="a" style="left:28.30px;top:68.80px;" width="6.6" height="7.2" viewBox="0 0 6.6 7.2"><rect x="0" y="0" width="6.6" height="7.2" rx=".8" fill="#b9f0c4"/><rect x="0.9" y="1.100" width="4.800" height="5" fill="#fff"/><path d="M1.700 3.600l1.200 1.300 2.200-2.600" fill="none" stroke="#2da44e" stroke-width="1"/></svg>
<svg class="a" style="left:28.40px;top:94.20px;" width="4.4" height="3.6" viewBox="0 0 4.4 3.6"><path d="M0.5 1.9L1.700 3.100 3.900 0.600" fill="none" stroke="#3fb950" stroke-width=".8" stroke-linecap="round"/></svg>
<svg class="a" style="left:28.60px;top:101.10px;" width="4" height="4" viewBox="0 0 4 4"><rect x="0.5" y="0.600" width="3" height="3" rx=".5" fill="none" stroke="#d4822a" stroke-width=".8"/><path d="M0.400 0.900h3.200" stroke="#d4822a" stroke-width=".9"/></svg>
<svg class="a" style="left:28.40px;top:121.30px;" width="4.4" height="3.6" viewBox="0 0 4.4 3.6"><path d="M0.5 1.9L1.700 3.100 3.900 0.600" fill="none" stroke="#3fb950" stroke-width=".8" stroke-linecap="round"/></svg>
<svg class="a" style="left:28.40px;top:128.60px;" width="4.4" height="3.6" viewBox="0 0 4.4 3.6"><path d="M0.5 1.9L1.700 3.100 3.900 0.600" fill="none" stroke="#3fb950" stroke-width=".8" stroke-linecap="round"/></svg>
<svg class="a" style="left:28.40px;top:135.70px;" width="4.4" height="3.6" viewBox="0 0 4.4 3.6"><path d="M0.5 1.9L1.700 3.100 3.900 0.600" fill="none" stroke="#3fb950" stroke-width=".8" stroke-linecap="round"/></svg>
<svg class="a" style="left:29.20px;top:159.70px;" width="7.6" height="7.6" viewBox="0 0 7.6 7.6"><circle cx="3.8" cy="3.8" r="3.500" fill="#1c2128" stroke="#2b3138" stroke-width=".6"/><circle cx="3.8" cy="3.8" r="1.700" fill="none" stroke="#8b949e" stroke-width=".5"/><path d="M3 4.200c.5.500 1.100.5 1.600 0" fill="none" stroke="#8b949e" stroke-width=".4"/></svg>
<div class="a" style="left:3.00px;top:179.30px;width:309.80px;height:0.90px;background:#2a3038;"></div>
<div class="a" style="left:22.70px;top:185.40px;width:290.10px;height:26.20px;background:#0d1117;border:0.7px solid #2b3138;box-sizing:border-box;border-radius:1.8px;"></div>
<svg class="a" style="left:28.20px;top:191.20px;" width="9.6" height="9.6" viewBox="0 0 9.6 9.6"><circle cx="4.8" cy="4.8" r="4.400" fill="#171c23" stroke="#2b3138" stroke-width=".6"/><path d="M6.900 2.700c-1.500 0-2.600.8-3.300 2.100l-1 .2.700.7.900.9.700.7.200-1c1.300-.7 2.100-1.800 2.100-3.300z M3.200 6.100l-.7.700" fill="none" stroke="#aab2bb" stroke-width=".55" stroke-linejoin="round"/></svg>
<div class="a" style="left:4.20px;top:217.60px;width:13.40px;height:13.00px;background:#6e7681;border-radius:2px;"></div>
<svg class="a" style="left:6.40px;top:219.40px;" width="9" height="9.4" viewBox="0 0 9 9.4"><g fill="none" stroke="#fff" stroke-width=".8"><circle cx="2.700" cy="2" r="1.100"/><circle cx="2.700" cy="7.400" r="1.100"/><circle cx="6.700" cy="4.700" r="1.100"/><path d="M2.700 3.100v3.200M2.700 3.100c0 1.600 1.400 1.600 2.900 1.600"/></g></svg>
<div class="a" style="left:22.70px;top:217.40px;width:290.10px;height:238.60px;background:#0d1117;border:0.7px solid #2b3138;box-sizing:border-box;border-radius:1.8px;"></div>
<div class="a" style="left:28.20px;top:223.00px;width:11.10px;height:11.10px;background:#e5383f;border-radius:5.6px;"></div>
<svg class="a" style="left:31.50px;top:226.30px;" width="4.5" height="4.5" viewBox="0 0 4.5 4.5"><path d="M1.200 1.200l2.100 2.100M3.300 1.200L1.200 3.300" stroke="#fff" stroke-width=".8" stroke-linecap="round"/></svg>
<svg class="a" style="left:299.20px;top:229.00px;" width="4" height="2.6" viewBox="0 0 4 2.6"><path d="M0.500 2L2 0.600 3.500 2" fill="none" stroke="#8b949e" stroke-width=".6"/></svg>
<svg class="a" style="left:299.20px;top:280.60px;" width="4" height="2.6" viewBox="0 0 4 2.6"><path d="M0.500 2L2 0.600 3.500 2" fill="none" stroke="#8b949e" stroke-width=".6"/></svg>
<div class="a" style="left:23.40px;top:244.80px;width:288.70px;height:22.70px;background:#010409;"></div>
<div class="a" style="left:23.40px;top:244.50px;width:288.70px;height:0.60px;background:#171d25;"></div>
<div class="a" style="left:23.40px;top:267.20px;width:288.70px;height:0.60px;background:#171d25;"></div>
<svg class="a" style="left:29.20px;top:249.40px;" width="4.2" height="4.6" viewBox="0 0 4.2 4.6"><rect x="0.400" y="0.400" width="3.400" height="3.800" rx=".5" fill="none" stroke="#f0483e" stroke-width=".8"/><path d="M1.300 2.300h1.600M2.100 1.300v2" stroke="#f0483e" stroke-width=".6"/></svg>
<svg class="a" style="left:29.20px;top:258.80px;" width="4.2" height="4.6" viewBox="0 0 4.2 4.6"><circle cx="2.100" cy="1.400" r="1" fill="none" stroke="#8b949e" stroke-width=".6"/><path d="M0.500 4.300c0-1.300.7-1.900 1.600-1.900s1.600.6 1.600 1.900" fill="none" stroke="#8b949e" stroke-width=".6"/></svg>
<svg class="a" style="left:28.20px;top:274.80px;" width="11" height="11" viewBox="0 0 11 11"><circle cx="5.500" cy="5.500" r="4.700" fill="#161b22" stroke="#3fb950" stroke-width="1.200"/></svg>
<div class="a" style="left:23.40px;top:295.50px;width:288.70px;height:103.10px;background:#010409;"></div>
<div class="a" style="left:23.40px;top:295.20px;width:288.70px;height:0.60px;background:#171d25;"></div>
<div class="a" style="left:23.40px;top:398.30px;width:288.70px;height:0.60px;background:#171d25;"></div>
<svg class="a" style="left:297.40px;top:301.80px;" width="5" height="5" viewBox="0 0 5 5"><circle cx="2.500" cy="2.500" r="1.500" fill="none" stroke="#8b949e" stroke-width="1.100" stroke-dasharray=".9 .5"/><circle cx="2.500" cy="2.500" r=".9" fill="none" stroke="#8b949e" stroke-width=".5"/></svg>
<div class="a" style="left:32.20px;top:315.00px;width:2.60px;height:2.60px;background:#dfe4ea;border-radius:0.4px;"></div>
<svg class="a" style="left:39.20px;top:313.30px;" width="6.2" height="6" viewBox="0 0 6.2 6"><rect width="6.200" height="6" rx=".8" fill="#29917f"/><path d="M1.600 3h3M3.100 1.500v3" stroke="#d9fff6" stroke-width=".7"/></svg>
<div class="a" style="left:32.20px;top:327.80px;width:2.60px;height:2.60px;background:#dfe4ea;border-radius:0.4px;"></div>
<svg class="a" style="left:39.20px;top:326.10px;" width="6.2" height="6" viewBox="0 0 6.2 6"><rect width="6.200" height="6" rx=".8" fill="#29917f"/><path d="M1.600 3h3M3.100 1.500v3" stroke="#d9fff6" stroke-width=".7"/></svg>
<svg class="a" style="left:30.78px;top:349.42px;" width="4.840000000000001" height="3.9600000000000004" viewBox="0 0 4.4 3.6"><path d="M0.5 1.9L1.700 3.100 3.900 0.600" fill="none" stroke="#3fb950" stroke-width=".8" stroke-linecap="round"/></svg>
<svg class="a" style="left:39.20px;top:348.30px;" width="6.2" height="6.2" viewBox="0 0 6.2 6.2"><circle cx="3.100" cy="3.100" r="3" fill="#f0f3f6"/><path d="M3.100 1.300c-1.100 0-1.900.8-1.900 1.800 0 .8.500 1.400 1.200 1.700v1.200h1.400V4.800c.7-.3 1.200-.9 1.200-1.700 0-1-.8-1.800-1.900-1.800z" fill="#010409"/></svg>
<svg class="a" style="left:30.78px;top:361.92px;" width="4.840000000000001" height="3.9600000000000004" viewBox="0 0 4.4 3.6"><path d="M0.5 1.9L1.700 3.100 3.900 0.600" fill="none" stroke="#3fb950" stroke-width=".8" stroke-linecap="round"/></svg>
<svg class="a" style="left:39.20px;top:360.90px;" width="6.2" height="6" viewBox="0 0 6.2 6"><rect width="6.200" height="6" rx=".8" fill="#29917f"/><path d="M1.600 3h3M3.100 1.500v3" stroke="#d9fff6" stroke-width=".7"/></svg>
<svg class="a" style="left:30.78px;top:374.52px;" width="4.840000000000001" height="3.9600000000000004" viewBox="0 0 4.4 3.6"><path d="M0.5 1.9L1.700 3.100 3.900 0.600" fill="none" stroke="#3fb950" stroke-width=".8" stroke-linecap="round"/></svg>
<svg class="a" style="left:39.20px;top:373.40px;" width="6.2" height="6.2" viewBox="0 0 6.2 6.2"><circle cx="3.100" cy="3.100" r="3" fill="#f0f3f6"/><path d="M3.100 1.300c-1.100 0-1.900.8-1.900 1.800 0 .8.500 1.400 1.200 1.700v1.200h1.400V4.800c.7-.3 1.200-.9 1.200-1.700 0-1-.8-1.800-1.900-1.800z" fill="#010409"/></svg>
<svg class="a" style="left:30.78px;top:387.02px;" width="4.840000000000001" height="3.9600000000000004" viewBox="0 0 4.4 3.6"><path d="M0.5 1.9L1.700 3.100 3.900 0.600" fill="none" stroke="#3fb950" stroke-width=".8" stroke-linecap="round"/></svg>
<svg class="a" style="left:39.20px;top:385.90px;" width="6.2" height="6.2" viewBox="0 0 6.2 6.2"><circle cx="3.100" cy="3.100" r="3" fill="#f0f3f6"/><path d="M3.100 1.300c-1.100 0-1.900.8-1.900 1.800 0 .8.500 1.400 1.200 1.700v1.200h1.400V4.800c.7-.3 1.200-.9 1.200-1.700 0-1-.8-1.800-1.900-1.800z" fill="#010409"/></svg>
<div class="a" style="left:28.50px;top:322.30px;width:277.50px;height:0.60px;background:#1c222a;"></div>
<div class="a" style="left:28.50px;top:335.20px;width:277.50px;height:0.60px;background:#1c222a;"></div>
<div class="a" style="left:28.50px;top:357.40px;width:277.50px;height:0.60px;background:#1c222a;"></div>
<div class="a" style="left:28.50px;top:370.00px;width:277.50px;height:0.60px;background:#1c222a;"></div>
<div class="a" style="left:28.50px;top:382.60px;width:277.50px;height:0.60px;background:#1c222a;"></div>
<div class="a" style="left:28.50px;top:395.20px;width:277.50px;height:0.60px;background:#1c222a;"></div>
<div class="a" style="left:39.20px;top:397.40px;width:6.20px;height:1.20px;background:#29917f;"></div>
<div class="a" style="left:28.20px;top:404.20px;width:11.10px;height:11.10px;background:#e5383f;border-radius:5.6px;"></div>
<svg class="a" style="left:30.30px;top:405.90px;" width="7" height="7" viewBox="0 0 7 7"><path d="M3.500 0.800L6.500 6H0.500z" fill="#fff" stroke="#fff" stroke-width=".6" stroke-linejoin="round"/><path d="M3.500 2.600v1.800M3.500 5v.5" stroke="#e5383f" stroke-width=".7"/></svg>
<div class="a" style="left:23.40px;top:424.80px;width:288.70px;height:31.20px;background:#151b23;"></div>
<div class="a" style="left:23.40px;top:424.50px;width:288.70px;height:0.60px;background:#262c34;"></div>
<div class="a" style="left:29.20px;top:431.00px;width:62.60px;height:17.00px;background:#1c222b;border:0.6px solid #2e353d;box-sizing:border-box;border-radius:1.6px;"></div>
<div class="a" style="left:81.50px;top:431.40px;width:0.60px;height:16.60px;background:#2e353d;"></div>
<svg class="a tx" style="left:0;top:0" width="322" height="442">
<text y="16.19" font-size="4.25" fill="#a9b1bb" font-family='"Liberation Mono",monospace' x="46.00" textLength="166.00" lengthAdjust="spacingAndGlyphs">Merge branch 'development' into nikita-weekly-company-summary-email</text>
<rect x="46.00" y="16.85" width="166.00" height="0.5" fill="#a9b1bb" opacity="0.75"/>
<text y="34.09" font-size="4.25" fill="#a9b1bb" font-family='"Liberation Mono",monospace' x="46.00" textLength="44.50" lengthAdjust="spacingAndGlyphs">Fix prettier error</text>
<rect x="46.00" y="34.85" width="44.50" height="0.5" fill="#a9b1bb" opacity="0.75"/>
<text y="16.19" font-size="4.25" fill="#a9b1bb" font-family='"Liberation Mono",monospace' x="295.00" textLength="17.20" lengthAdjust="spacingAndGlyphs">a9ab306</text>
<rect x="295.00" y="16.85" width="17.20" height="0.5" fill="#a9b1bb" opacity="0.75"/>
<text y="34.29" font-size="4.25" fill="#a9b1bb" font-family='"Liberation Mono",monospace' x="295.00" textLength="17.20" lengthAdjust="spacingAndGlyphs">5d8db40</text>
<rect x="295.00" y="34.85" width="17.20" height="0.5" fill="#a9b1bb" opacity="0.75"/>
<text y="57.75" font-size="4.7" fill="#e6edf3" font-weight="700" x="28.50" textLength="38.10" lengthAdjust="spacingAndGlyphs">sonarqubecloud</text>
<rect x="28.50" y="58.94" width="38.10" height="0.5" fill="#e6edf3" opacity="0.75"/>
<text y="57.43" font-size="3.5" fill="#8b949e" x="73.30" text-anchor="middle">bot</text>
<text y="57.85" font-size="5.0" fill="#8b949e" x="81.00" textLength="27.00" lengthAdjust="spacingAndGlyphs">commented</text>
<text y="57.85" font-size="5.0" fill="#8b949e" x="110.00" textLength="28.80" lengthAdjust="spacingAndGlyphs">15 hours ago</text>
<rect x="110.00" y="59.00" width="28.80" height="0.5" fill="#8b949e" opacity="0.75"/>
<text y="57.52" font-size="5.5" fill="#8b949e" font-weight="700" x="302.40" text-anchor="middle">···</text>
<text y="75.53" font-size="7.5" fill="#e6edf3" font-weight="700" x="37.30" textLength="70.70" lengthAdjust="spacingAndGlyphs">Quality Gate passed</text>
<text y="90.11" font-size="4.6" fill="#e6edf3" font-weight="700" x="28.50" textLength="14.10" lengthAdjust="spacingAndGlyphs">Issues</text>
<text y="97.73" font-size="4.95" fill="#57a3fb" x="35.00" textLength="29.20" lengthAdjust="spacingAndGlyphs">0 New issues</text>
<rect x="35.00" y="98.99" width="29.20" height="0.5" fill="#57a3fb" opacity="0.75"/>
<text y="104.83" font-size="4.95" fill="#57a3fb" x="35.00" textLength="40.00" lengthAdjust="spacingAndGlyphs">0 Accepted issues</text>
<rect x="35.00" y="105.99" width="40.00" height="0.5" fill="#57a3fb" opacity="0.75"/>
<text y="117.61" font-size="4.6" fill="#e6edf3" font-weight="700" x="28.50" textLength="21.50" lengthAdjust="spacingAndGlyphs">Measures</text>
<text y="124.83" font-size="4.95" fill="#57a3fb" x="35.00" textLength="44.20" lengthAdjust="spacingAndGlyphs">0 Security Hotspots</text>
<rect x="35.00" y="125.99" width="44.20" height="0.5" fill="#57a3fb" opacity="0.75"/>
<text y="132.13" font-size="4.95" fill="#57a3fb" x="35.00" textLength="64.80" lengthAdjust="spacingAndGlyphs">0.0% Coverage on New Code</text>
<rect x="35.00" y="132.99" width="64.80" height="0.5" fill="#57a3fb" opacity="0.75"/>
<text y="139.23" font-size="4.95" fill="#57a3fb" x="35.00" textLength="69.80" lengthAdjust="spacingAndGlyphs">0.0% Duplication on New Code</text>
<rect x="35.00" y="139.99" width="69.80" height="0.5" fill="#57a3fb" opacity="0.75"/>
<text y="152.03" font-size="4.95" fill="#57a3fb" x="28.50" textLength="92.00" lengthAdjust="spacingAndGlyphs">See analysis details on SonarQube Cloud</text>
<rect x="28.50" y="152.99" width="92.00" height="0.5" fill="#57a3fb" opacity="0.75"/>
<text y="197.36" font-size="5.6" fill="#e6edf3" font-weight="700" x="42.30" textLength="93.20" lengthAdjust="spacingAndGlyphs">This branch has not been deployed</text>
<text y="204.65" font-size="5.0" fill="#8b949e" x="42.30" textLength="34.50" lengthAdjust="spacingAndGlyphs">No deployments</text>
<text y="229.36" font-size="5.6" fill="#e6edf3" font-weight="700" x="42.30" textLength="43.20" lengthAdjust="spacingAndGlyphs">Review required</text>
<text y="237.35" font-size="5.0" fill="#8b949e" x="42.30" textLength="157.10" lengthAdjust="spacingAndGlyphs">At least 1 approving review is required by reviewers with write access.</text>
<text y="253.34" font-size="4.4" fill="#aab2bb" x="36.80" textLength="39.20" lengthAdjust="spacingAndGlyphs">1 requested change</text>
<text y="253.74" font-size="4.4" fill="#8b949e" x="79.40">›</text>
<text y="262.64" font-size="4.4" fill="#aab2bb" x="36.80" textLength="33.60" lengthAdjust="spacingAndGlyphs">1 pending review</text>
<text y="263.04" font-size="4.4" fill="#8b949e" x="73.40">›</text>
<text y="281.06" font-size="5.6" fill="#e6edf3" font-weight="700" x="42.30" textLength="60.70" lengthAdjust="spacingAndGlyphs">All checks have passed</text>
<text y="288.65" font-size="5.0" fill="#8b949e" x="42.30" textLength="66.20" lengthAdjust="spacingAndGlyphs">2 neutral, 6 successful checks</text>
<text y="305.61" font-size="4.3" fill="#a4acb6" x="28.50" textLength="31.50" lengthAdjust="spacingAndGlyphs">2 neutral checks</text>
<text y="304.60" font-size="4" fill="#8b949e" x="61.00">⌄</text>
<text y="317.98" font-size="4.8" fill="#e6edf3" font-weight="700" x="47.50" textLength="90.50" lengthAdjust="spacingAndGlyphs">Header rules - highestgoodnetwork-dev</text>
<rect x="47.50" y="318.96" width="90.50" height="0.5" fill="#e6edf3" opacity="0.75"/>
<text y="317.89" font-size="4.25" fill="#8b949e" x="141.00" textLength="91.00" lengthAdjust="spacingAndGlyphs">Completed in 1m — No header rules processed</text>
<text y="317.51" font-size="4.6" fill="#8b949e" font-weight="700" x="299.80" text-anchor="middle">···</text>
<text y="330.78" font-size="4.8" fill="#e6edf3" font-weight="700" x="47.50" textLength="96.30" lengthAdjust="spacingAndGlyphs">Pages changed - highestgoodnetwork-dev</text>
<rect x="47.50" y="331.96" width="96.30" height="0.5" fill="#e6edf3" opacity="0.75"/>
<text y="330.69" font-size="4.25" fill="#8b949e" x="146.80" textLength="81.00" lengthAdjust="spacingAndGlyphs">Completed in 1m — 65 new files uploaded</text>
<text y="330.31" font-size="4.6" fill="#8b949e" font-weight="700" x="299.80" text-anchor="middle">···</text>
<text y="353.08" font-size="4.8" fill="#e6edf3" font-weight="700" x="47.50" textLength="123.90" lengthAdjust="spacingAndGlyphs">Close PRs from Forks / check-fork (pull_request_target)</text>
<rect x="47.50" y="353.96" width="123.90" height="0.5" fill="#e6edf3" opacity="0.75"/>
<text y="352.99" font-size="4.25" fill="#8b949e" x="174.00" textLength="29.80" lengthAdjust="spacingAndGlyphs">Successful in 2s</text>
<text y="352.61" font-size="4.6" fill="#8b949e" font-weight="700" x="299.80" text-anchor="middle">···</text>
<text y="365.58" font-size="4.8" fill="#e6edf3" font-weight="700" x="47.50" textLength="109.30" lengthAdjust="spacingAndGlyphs">netlify/highestgoodnetwork-dev/deploy-preview</text>
<rect x="47.50" y="366.96" width="109.30" height="0.5" fill="#e6edf3" opacity="0.75"/>
<text y="365.49" font-size="4.25" fill="#8b949e" x="160.00" textLength="49.00" lengthAdjust="spacingAndGlyphs">— Deploy Preview ready!</text>
<text y="365.11" font-size="4.6" fill="#8b949e" font-weight="700" x="299.80" text-anchor="middle">···</text>
<text y="378.18" font-size="4.8" fill="#e6edf3" font-weight="700" x="47.50" textLength="133.50" lengthAdjust="spacingAndGlyphs">Pull Request Unit Test / Enforce CSS Modules (pull_request)</text>
<rect x="47.50" y="378.96" width="133.50" height="0.5" fill="#e6edf3" opacity="0.75"/>
<text y="378.09" font-size="4.25" fill="#8b949e" x="183.60" textLength="32.40" lengthAdjust="spacingAndGlyphs">Successful in 13s</text>
<text y="377.71" font-size="4.6" fill="#8b949e" font-weight="700" x="299.80" text-anchor="middle">···</text>
<text y="390.68" font-size="4.8" fill="#e6edf3" font-weight="700" x="47.50" textLength="94.80" lengthAdjust="spacingAndGlyphs">Pull Request Unit Test / test (pull_request)</text>
<rect x="47.50" y="391.96" width="94.80" height="0.5" fill="#e6edf3" opacity="0.75"/>
<text y="390.59" font-size="4.25" fill="#8b949e" x="145.00" textLength="31.70" lengthAdjust="spacingAndGlyphs">Successful in 4m</text>
<text y="390.21" font-size="4.6" fill="#8b949e" font-weight="700" x="299.80" text-anchor="middle">···</text>
<text y="341.11" font-size="4.3" fill="#a4acb6" x="28.50" textLength="39.00" lengthAdjust="spacingAndGlyphs">6 successful checks</text>
<text y="340.10" font-size="4" fill="#8b949e" x="68.40">⌄</text>
<text y="411.16" font-size="5.6" fill="#e6edf3" font-weight="700" x="42.30" textLength="50.70" lengthAdjust="spacingAndGlyphs">Merging is blocked</text>
<text y="418.65" font-size="5.0" fill="#8b949e" x="42.30" textLength="157.10" lengthAdjust="spacingAndGlyphs">At least 1 approving review is required by reviewers with write access.</text>
<text y="438.65" font-size="5.0" fill="#5d6670" x="34.40" textLength="41.80" lengthAdjust="spacingAndGlyphs">Merge pull request</text>
<text y="438.26" font-size="3.6" fill="#5d6670" x="86.60" text-anchor="middle">▾</text>
<text y="438.44" font-size="4.4" fill="#8b949e" x="94.30" textLength="92.30" lengthAdjust="spacingAndGlyphs">You can also merge this with the command line.</text>
<text y="438.44" font-size="4.4" fill="#57a3fb" x="188.40" textLength="63.30" lengthAdjust="spacingAndGlyphs">View command line instructions.</text>
<rect x="188.40" y="438.88" width="63.30" height="0.5" fill="#57a3fb" opacity="0.75"/>
</svg>
</div>
</body></html>
